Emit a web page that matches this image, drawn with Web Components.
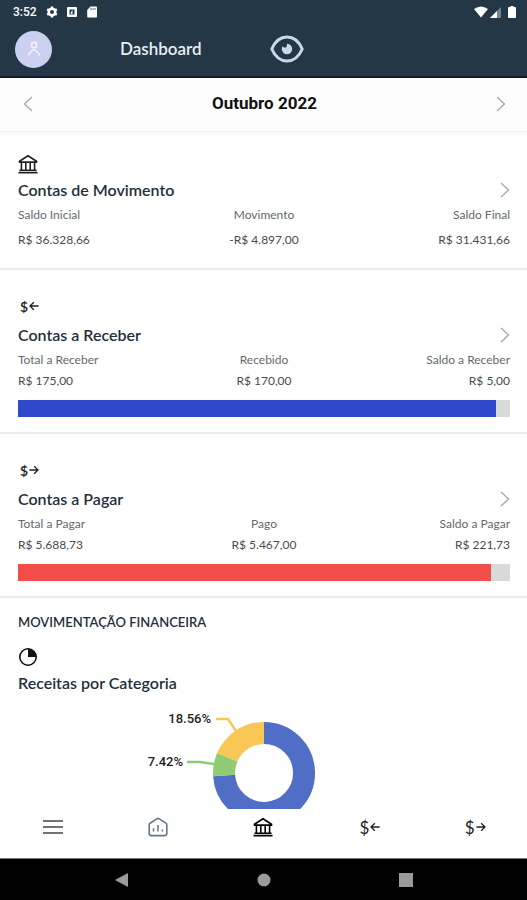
<!DOCTYPE html>
<html lang="pt-BR">
<head>
<meta charset="utf-8">
<meta name="viewport" content="width=device-width, initial-scale=1">
<title>Dashboard</title>
<style>
body {
  margin: 0;
  background: #fff;
  color: #1f2f3c;
  font-family: Lato, "Liberation Sans", sans-serif;
}
</style>
</head>
<body>
<finance-app>
  <status-bar slot="top" time="3:52"></status-bar>
  <app-header slot="top">Dashboard</app-header>

  <month-picker>Outubro 2022</month-picker>

  <account-card icon="bank" heading="Contas de Movimento" class="plain">
    <amount-cell label="Saldo Inicial">R$ 36.328,66</amount-cell>
    <amount-cell label="Movimento" align="center">-R$ 4.897,00</amount-cell>
    <amount-cell label="Saldo Final" align="right">R$ 31.431,66</amount-cell>
  </account-card>

  <account-card icon="receive" heading="Contas a Receber" value="170" max="175" color="#3049cc">
    <amount-cell label="Total a Receber">R$ 175,00</amount-cell>
    <amount-cell label="Recebido" align="center">R$ 170,00</amount-cell>
    <amount-cell label="Saldo a Receber" align="right">R$ 5,00</amount-cell>
  </account-card>

  <account-card icon="pay" heading="Contas a Pagar" value="5467" max="5688.73" color="#f34d49">
    <amount-cell label="Total a Pagar">R$ 5.688,73</amount-cell>
    <amount-cell label="Pago" align="center">R$ 5.467,00</amount-cell>
    <amount-cell label="Saldo a Pagar" align="right">R$ 221,73</amount-cell>
  </account-card>

  <category-chart heading="Receitas por Categoria">MOVIMENTAÇÃO FINANCEIRA</category-chart>

  <tab-bar slot="bottom"></tab-bar>
  <system-nav slot="bottom"></system-nav>
</finance-app>

<script>
const icons = {
  bank: `<svg width="20" height="20" viewBox="0 0 20 20" fill="none" stroke="currentColor" stroke-width="1.6">
    <path d="M1.500 7.200 10 1.800l8.500 5.400v.9h-17zM3.400 8.500v8M7.800 8.500v8M12.200 8.500v8M16.600 8.500v8M1.500 16.200h17M.5 18.600h19"/></svg>`,
  receive: `<span class="money">$<svg width="10" height="10" viewBox="0 0 10 10" fill="none" stroke="currentColor" stroke-width="1.3">
    <path d="M9.600 5H1M4.800 1.200 1 5l3.800 3.800"/></svg></span>`,
  pay: `<span class="money">$<svg width="10" height="10" viewBox="0 0 10 10" fill="none" stroke="currentColor" stroke-width="1.3">
    <path d="M.4 5H9M5.200 1.200 9 5 5.200 8.800"/></svg></span>`,
  pie: `<svg width="20" height="20" viewBox="0 0 20 20"><circle cx="10" cy="10" r="8.200" fill="none" stroke="#111" stroke-width="1.600"/>
    <path d="M10 10V2a8 8 0 0 1 8 8z" fill="#111"/></svg>`,
  menu: `<svg width="20" height="20" viewBox="0 0 20 20" stroke="#444" stroke-width="1.600"><path d="M0 4h20M0 10h20M0 16h20"/></svg>`,
  home: `<svg width="20" height="20" viewBox="0 0 20 20" fill="none" stroke="#66758a" stroke-width="1.600">
    <path d="M1.200 7.600Q1.200 6.700 2 6.200L9.200 1.600q.8-.5 1.600 0L18 6.200q.8.5.8 1.400v9q0 2-2 2H3.200q-2 0-2-2z"/>
    <path d="M5.500 14.600v-3.400M10 14.600V8M14.400 14.600v-2" stroke-width="1.500"/></svg>`,
  left: `<svg width="10" height="16" viewBox="0 0 10 16" fill="none" stroke="#aaa" stroke-width="1.400"><path d="M9 1 1.500 8 9 15"/></svg>`,
  right: `<svg width="10" height="16" viewBox="0 0 10 16" fill="none" stroke="#aaa" stroke-width="1.400"><path d="M1 1l7.500 7L1 15"/></svg>`
};

const base = `
  * { box-sizing: border-box; }
  svg { display: block; flex: none; }
  button, a { display: flex; align-items: center; justify-content: center; padding: 0; border: 0; background: none; color: inherit; font: inherit; cursor: pointer; }
  h1, h2, h3, p { margin: 0; }
  .money { display: flex; align-items: center; gap: 1px; padding-left: 2px; }
`;

class BaseElement extends HTMLElement {
  constructor() {
    super();
    this.attachShadow({ mode: "open" });
  }

  connectedCallback() {
    const template = document.createElement("template");
    template.innerHTML = `<style>${base}</style>` + this.render();
    this.shadowRoot.replaceChildren(template.content.cloneNode(true));
  }
}

class FinanceApp extends BaseElement {
  render() {
    return `
    <style>
      :host { display: flex; flex-direction: column; height: 100vh; }
      main { flex: 1; min-height: 0; overflow: hidden; }
    </style>
    <slot name="top"></slot>
    <main><slot></slot></main>
    <slot name="bottom"></slot>`;
  }
}

class StatusBar extends BaseElement {
  render() {
    return `
    <style>
      :host { display: flex; align-items: center; gap: 8px; height: 24px; padding: 0 11px 0 13px; background: #233746; color: #fff; font: 500 12px/24px Roboto, sans-serif; }
      span { margin-right: 1px; }
      .signal { display: flex; align-items: center; gap: 2px; margin-left: auto; }
      .signal :last-child { margin-left: 4px; }
    </style>
    <span>${this.getAttribute("time")}</span>
    <svg width="12" height="12" viewBox="0 0 12 12" fill="none" stroke="#fff">
      <circle cx="6" cy="6" r="3.300" stroke-width="2.600"/>
      <path d="M6 .4v2M6 9.600v2M1.200 3.200l1.700 1M9.100 7.800l1.700 1M1.200 8.800l1.700-1M9.100 4.200l1.700-1" stroke-width="2.400"/></svg>
    <svg width="12" height="12" viewBox="0 0 12 12"><rect x="1" y="1" width="10" height="10" rx="1" fill="#fff"/>
      <path d="M3.500 3.500h5v5h-5z" fill="#233746"/><path d="M6.500 4v4H5L4.500 6.500z" fill="#fff"/></svg>
    <svg width="12" height="12" viewBox="0 0 12 12"><path d="M4.500.5H10a1 1 0 0 1 1 1v9a1 1 0 0 1-1 1H2.200a1 1 0 0 1-1-1V4z" fill="#fff"/>
      <path d="M5 2v2M7 2v2M9 2v2" stroke="#233746" stroke-width=".7"/></svg>
    <div class="signal">
      <svg width="14" height="12" viewBox="0 0 14 12"><path d="M0 3q7-5 14 0L7 11.500z" fill="#fff"/></svg>
      <svg width="12" height="12" viewBox="0 0 12 12"><path d="M11 1v11H0z" fill="#75828c"/><path d="M7 5v7H0z" fill="#fff"/></svg>
      <svg width="8" height="12" viewBox="0 0 8 12"><path d="M2.500 0h3v1H7q1 0 1 1v9q0 1-1 1H1q-1 0-1-1V2q0-1 1-1h1.500z" fill="#fff"/></svg>
    </div>`;
  }
}

class AppHeader extends BaseElement {
  render() {
    return `
    <style>
      :host { display: flex; align-items: center; gap: 68px; height: 54px; padding: 0 15px 2px; border-bottom: 2px solid #12192f; box-sizing: border-box; background: #233746; }
      h1 { color: #e8edf2; font-size: 17px; font-weight: 600; line-height: 24px; }
      .avatar { width: 37px; height: 37px; border-radius: 50%; background: #cbcff0; }
    </style>
    <button class="avatar" aria-label="Perfil">
      <svg width="14" height="16" viewBox="0 0 14 16" fill="none" stroke="#f4f5ff" stroke-width="1.500">
        <circle cx="7" cy="4.200" r="2.600"/><path d="M1.500 14.500Q2.200 11.500 7 8.600q4.800 2.900 5.500 5.900"/></svg>
    </button>
    <h1><slot></slot></h1>
    <button aria-label="Mostrar valores">
      <svg width="34" height="28" viewBox="0 0 34 28">
        <path d="M1.800 14C5 6.500 10.500 2 17 2s12 4.500 15.200 12C29 21.500 23.500 26 17 26S5 21.500 1.800 14z" fill="none" stroke="#c9d8ef" stroke-width="3"/>
        <path d="M17 14V8.800A5.200 5.200 0 1 1 11.800 14q0-1.600.8-2.800 1.200 1.800 2.800 1.400T17 8.800z" fill="#c9d8ef"/></svg>
    </button>`;
  }
}

class MonthPicker extends BaseElement {
  render() {
    return `
    <style>
      :host { display: flex; align-items: center; justify-content: space-between; height: 54px; margin-bottom: 3px; padding: 0 14px 2px 16px; border-bottom: 1px solid #f3f3f3; box-sizing: border-box; background: #fdfdfd; box-shadow: 0 3px 0 #fafafa; }
      h2 { color: #111; font: 700 17px/24px Roboto, sans-serif; margin-bottom: 2px; }
      button { width: 24px; height: 24px; }
    </style>
    <button aria-label="Mês anterior">${icons.left}</button>
    <h2><slot></slot></h2>
    <button aria-label="Próximo mês">${icons.right}</button>`;
  }
}

class AmountCell extends BaseElement {
  render() {
    return `
    <style>
      :host { display: grid; gap: var(--row-gap, 1px); font-size: 12px; line-height: 20px; text-align: ${this.getAttribute("align") || "left"}; }
      .label { color: #65696e; }
      .amount { color: #484b50; }
    </style>
    <p class="label">${this.getAttribute("label")}</p>
    <p class="amount"><slot></slot></p>`;
  }
}

class AccountCard extends BaseElement {
  render() {
    const max = this.getAttribute("max");
    const heading = this.getAttribute("heading");
    return `
    <style>
      :host { display: block; padding: 26px 17px 15px 18px; border-bottom: 2px solid #ececec; }
      :host(.plain) { --row-gap: 5px; padding-top: 19px; padding-bottom: 18px; }
      .icon { display: flex; align-items: center; height: 20px; margin-bottom: 7px; color: #222; font-size: 14px; font-weight: 600; }
      :host(.plain) .icon { margin-bottom: 4px; }
      .title { display: flex; align-items: center; justify-content: space-between; height: 24px; margin-bottom: 3px; }
      h3 { font-size: 16px; font-weight: 600; line-height: 24px; }
      .cells { display: grid; grid-template-columns: repeat(3, 1fr); }
      progress { display: block; width: 100%; height: 17px; margin-top: 9px; border: 0; appearance: none; background: #d8dada; }
      progress::-webkit-progress-bar { background: #d8dada; }
      progress::-webkit-progress-value { background: ${this.getAttribute("color")}; }
      progress::-moz-progress-bar { background: ${this.getAttribute("color")}; }
    </style>
    <div class="icon">${icons[this.getAttribute("icon")]}</div>
    <div class="title">
      <h3>${heading}</h3>
      <a href="#" aria-label="${heading}">${icons.right}</a>
    </div>
    <div class="cells"><slot></slot></div>
    ${max ? `<progress value="${this.getAttribute("value")}" max="${max}" aria-label="${heading}"></progress>` : ""}`;
  }
}

class CategoryChart extends BaseElement {
  render() {
    return `
    <style>
      :host { display: block; padding: 14px 18px 0; }
      h2 { font-size: 13px; font-weight: 600; line-height: 20px; margin-bottom: 15px; }
      h3 { font-size: 16px; font-weight: 600; line-height: 24px; margin-top: 4px; }
      .chart { margin: 8px auto 0; }
      text { fill: #222; font: 500 13px Roboto, sans-serif; }
    </style>
    <h2><slot></slot></h2>
    ${icons.pie}
    <h3>${this.getAttribute("heading")}</h3>
    <svg class="chart" width="240" height="140" viewBox="-120 -70 240 140">
      <g fill="none" stroke-width="22">
        <path d="M0-40A40 40 0 1 1-39.900 2.500" stroke="#516ec7"/>
        <path d="M-39.900 2.500A40 40 0 0 1-36.800-15.700" stroke="#8fcb74"/>
        <path d="M-36.800-15.700A40 40 0 0 1 0-40" stroke="#f9c755"/>
      </g>
      <g fill="none" stroke-width="2.400">
        <path d="M-48-54h12l8 12" stroke="#f9c755"/>
        <path d="M-77-11h13l14 2" stroke="#8fcb74"/>
      </g>
      <text x="-53" y="-50" text-anchor="end">18.56%</text>
      <text x="-81" y="-7" text-anchor="end">7.42%</text>
    </svg>`;
  }
}

class TabBar extends BaseElement {
  render() {
    return `
    <style>
      :host { display: block; background: #fff; border-bottom: 1px solid #777; }
      nav { display: grid; grid-template-columns: repeat(5, 1fr); height: 49px; padding-bottom: 13px; color: #222; font-size: 17px; }
      .active { color: #000; }
    </style>
    <nav>
      <button aria-label="Menu">${icons.menu}</button>
      <button aria-label="Início">${icons.home}</button>
      <button class="active" aria-label="Contas de Movimento">${icons.bank}</button>
      <button aria-label="Contas a Receber">${icons.receive}</button>
      <button aria-label="Contas a Pagar">${icons.pay}</button>
    </nav>`;
  }
}

class SystemNav extends BaseElement {
  render() {
    return `
    <style>
      :host { display: flex; justify-content: center; gap: 118px; height: 41px; background: #000; }
      button { width: 24px; }
    </style>
    <button aria-label="Voltar"><svg width="14" height="14" viewBox="0 0 14 14"><path d="M13 0v14L0 7z" fill="#9b9b9b"/></svg></button>
    <button aria-label="Tela inicial"><svg width="14" height="14" viewBox="0 0 14 14"><circle cx="7" cy="7" r="6.500" fill="#9b9b9b"/></svg></button>
    <button aria-label="Recentes"><svg width="14" height="14" viewBox="0 0 14 14"><path d="M0 0h14v14H0z" fill="#9b9b9b"/></svg></button>`;
  }
}

customElements.define("finance-app", FinanceApp);
customElements.define("status-bar", StatusBar);
customElements.define("app-header", AppHeader);
customElements.define("month-picker", MonthPicker);
customElements.define("amount-cell", AmountCell);
customElements.define("account-card", AccountCard);
customElements.define("category-chart", CategoryChart);
customElements.define("tab-bar", TabBar);
customElements.define("system-nav", SystemNav);
</script>
</body>
</html>
